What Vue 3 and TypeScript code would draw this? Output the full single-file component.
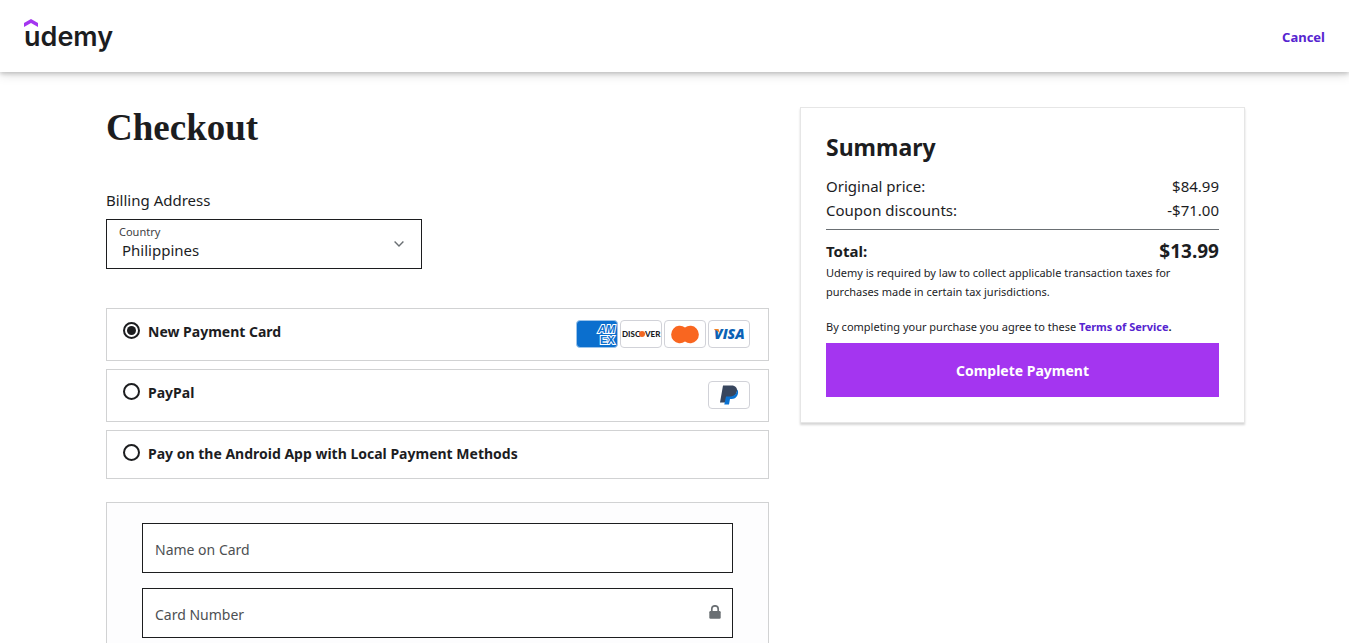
<script setup lang="ts">
import { ref } from 'vue'

interface PaymentMethod {
  id: string
  label: string
  brands: string[]
}

interface PriceLine {
  label: string
  amount: string
}

const countries: string[] = ['Philippines', 'Singapore', 'United States']
const country = ref('Philippines')

const methods: PaymentMethod[] = [
  { id: 'card', label: 'New Payment Card', brands: ['amex', 'discover', 'mastercard', 'visa'] },
  { id: 'paypal', label: 'PayPal', brands: ['paypal'] },
  { id: 'android', label: 'Pay on the Android App with Local Payment Methods', brands: [] },
]
const method = ref('card')

const prices: PriceLine[] = [
  { label: 'Original price:', amount: '$84.99' },
  { label: 'Coupon discounts:', amount: '-$71.00' },
]

const cardName = ref('')
const cardNumber = ref('')
</script>

<template>
  <div class="page">
    <header class="header">
      <a class="logo" href="#">
        <svg class="logo-hat" viewBox="0 0 14 8" aria-hidden="true">
          <path d="M7 0L14 4V8L7 4L0 8V4Z" />
        </svg>
        <span>udemy</span>
      </a>
      <a class="cancel" href="#">Cancel</a>
    </header>

    <main class="content">
      <section class="main">
        <h1>Checkout</h1>

        <h2 class="section-label">Billing Address</h2>
        <div class="country">
          <label for="country">Country</label>
          <select id="country" v-model="country">
            <option v-for="c in countries" :key="c" :value="c">{{ c }}</option>
          </select>
          <svg class="chevron" viewBox="0 0 10 6" aria-hidden="true">
            <path d="M0.6 0.6L5 5L9.4 0.6" />
          </svg>
        </div>

        <div class="methods" role="radiogroup" aria-label="Payment method">
          <label v-for="m in methods" :key="m.id" class="method" :for="m.id">
            <input :id="m.id" v-model="method" type="radio" name="method" :value="m.id" />
            <span class="method-label">{{ m.label }}</span>
            <span v-if="m.brands.length" class="brands">
              <span v-for="b in m.brands" :key="b" class="brand" :class="b">
                <svg v-if="b === 'amex'" viewBox="0 0 40 26" role="img" aria-label="American Express">
                  <g class="amex-text">
                    <text x="21" y="12" font-style="italic">AM</text>
                    <text x="23" y="23">EX</text>
                  </g>
                </svg>
                <svg v-else-if="b === 'discover'" viewBox="0 0 40 26" role="img" aria-label="Discover">
                  <text class="discover-text" x="1" y="16">DISC</text>
                  <text class="discover-text" x="24" y="16">VER</text>
                  <circle cx="21" cy="13" r="3" fill="#f26722" />
                </svg>
                <svg v-else-if="b === 'mastercard'" viewBox="0 0 40 26" role="img" aria-label="Mastercard">
                  <path d="M20 6.500A8.700 8.700 0 1 0 20 20.500A8.700 8.700 0 1 0 20 6.500Z" fill="#f96620" />
                </svg>
                <svg v-else-if="b === 'visa'" viewBox="0 0 40 26" role="img" aria-label="Visa">
                  <text class="visa-text" x="5" y="18">VISA</text>
                  <path d="M5 8H9.500L11 13C9.500 10.500 7.500 9 5 8.500Z" fill="#f58220" />
                </svg>
                <svg v-else viewBox="0 0 40 26" role="img" aria-label="PayPal">
                  <path d="M14 3.500H22.500C26.500 3.500 28.500 6 28 9C27.300 13.200 24.500 15 21 15H18L16.800 20.500H11Z" fill="#38465e" />
                  <path d="M28.200 7.500C29.500 9 29.300 11.500 28.300 13.500C27.200 16 25 17 22.500 17H21L20 22.500H15.300L17 14.500H21C24.800 14.500 27.800 12 28.200 7.500Z" fill="#0a73d3" />
                </svg>
              </span>
            </span>
          </label>
        </div>

        <form class="card-form" @submit.prevent>
          <div class="field">
            <input id="card-name" v-model="cardName" type="text" placeholder="Name on Card" aria-label="Name on Card" />
          </div>
          <div class="field">
            <input id="card-number" v-model="cardNumber" type="text" placeholder="Card Number" aria-label="Card Number" />
            <svg class="lock" viewBox="0 0 12 14" aria-hidden="true">
              <path d="M2.800 7V4A3.200 3.200 0 0 1 9.200 4V7" fill="none" stroke="#6a6f73" stroke-width="1.700" />
              <rect x="0.300" y="6" width="11.400" height="7.800" rx="1.200" fill="#6a6f73" />
            </svg>
          </div>
        </form>
      </section>

      <aside class="summary">
        <h2>Summary</h2>
        <dl class="prices">
          <div v-for="p in prices" :key="p.label" class="price">
            <dt>{{ p.label }}</dt>
            <dd>{{ p.amount }}</dd>
          </div>
          <div class="total">
            <dt>Total:</dt>
            <dd>$13.99</dd>
          </div>
        </dl>
        <p>Udemy is required by law to collect applicable transaction taxes for purchases made in certain tax jurisdictions.</p>
        <p class="terms">By completing your purchase you agree to these <a href="#">Terms of Service</a><b>.</b></p>
        <button type="button">Complete Payment</button>
      </aside>
    </main>
  </div>
</template>

<style>
html {
  scrollbar-width: none;
}

body {
  margin: 0;
  background: #fff;
}
</style>

<style scoped>
.page,
.page * {
  box-sizing: border-box;
}

.page {
  font-family: "Noto Sans", "Open Sans", sans-serif;
  font-size: 15px;
  line-height: 24px;
  color: #1c1d1f;
}

h1,
h2,
p,
dl,
dd {
  margin: 0;
}

.header {
  display: flex;
  align-items: center;
  justify-content: space-between;
  height: 72px;
  padding: 0 24px;
  background: #fff;
  box-shadow: 0 2px 4px rgba(0, 0, 0, 0.18), 0 4px 10px rgba(0, 0, 0, 0.1);
}

.logo {
  display: flex;
  flex-direction: column;
  font-family: Inter, sans-serif;
  font-size: 27px;
  font-weight: 600;
  line-height: 20px;
  color: #1c1d1f;
  text-decoration: none;
}

.logo-hat {
  width: 14px;
  height: 8px;
  fill: #a435f0;
}

.logo span {
  padding-bottom: 6px;
}

.cancel {
  padding-top: 2px;
  font-size: 13px;
  font-weight: 700;
  color: #5624d0;
  text-decoration: none;
}

.content {
  display: grid;
  grid-template-columns: minmax(0, 663fr) minmax(0, 445fr);
  gap: 31px;
  align-items: start;
  padding: 35px 104px 48px 106px;
}

h1 {
  font-family: "Liberation Serif", serif;
  font-size: 37px;
  font-weight: 700;
  line-height: 42px;
}

.section-label {
  margin-top: 39px;
  font-size: 15px;
  font-weight: 400;
  line-height: 24px;
}

.country {
  position: relative;
  max-width: 316px;
  height: 50px;
  margin-top: 7px;
}

.country label {
  position: absolute;
  top: 4px;
  left: 13px;
  font-size: 11px;
  line-height: 18px;
  color: #3e4143;
  pointer-events: none;
}

.country select {
  width: 100%;
  height: 100%;
  padding: 12px 40px 0 15px;
  border: 1px solid #1c1d1f;
  border-radius: 0;
  appearance: none;
  background: transparent;
  font: inherit;
  color: inherit;
}

.chevron {
  position: absolute;
  top: 22px;
  right: 18px;
  width: 10px;
  height: 6px;
  fill: none;
  stroke: #6a6f73;
  stroke-width: 1.4px;
}

.methods {
  display: flex;
  flex-direction: column;
  gap: 8px;
  margin-top: 39px;
}

.method {
  display: flex;
  align-items: flex-start;
  padding: 11px 18px 12px 16px;
  border: 1px solid #d1d2d3;
}

.method input {
  flex: none;
  display: grid;
  place-items: center;
  width: 17px;
  height: 17px;
  margin: 2px 8px 0 0;
  border: 2px solid #1c1d1f;
  border-radius: 50%;
  appearance: none;
}

.method input:checked::before {
  content: "";
  width: 9px;
  height: 9px;
  border-radius: 50%;
  background: #1c1d1f;
}

.method-label {
  flex: 1;
  font-size: 14px;
  font-weight: 700;
}

.brands {
  display: flex;
  gap: 2px;
}

.brand {
  width: 42px;
  height: 28px;
  border: 1px solid #d1d2d8;
  border-radius: 4px;
  overflow: hidden;
  background: #fff;
}

.brand svg {
  display: block;
  width: 100%;
  height: 100%;
}

.brand.amex {
  border-color: #9cc4ea;
  background: #0b6fce;
}

.amex-text {
  font-family: "Liberation Sans", sans-serif;
  font-size: 11px;
  font-weight: 700;
  fill: #0b6fce;
  stroke: #fff;
  stroke-width: 2px;
  paint-order: stroke;
}

.discover-text {
  font-family: Lato, sans-serif;
  font-size: 8px;
  font-weight: 900;
  fill: #1c1d1f;
}

.visa-text {
  font-family: "Open Sans", sans-serif;
  font-size: 14px;
  font-style: italic;
  font-weight: 800;
  fill: #0b62b5;
}

.card-form {
  display: flex;
  flex-direction: column;
  gap: 15px;
  margin-top: 23px;
  padding: 20px 35px;
  border: 1px solid #d1d2d3;
  background: #fdfdfe;
}

.field {
  position: relative;
}

.field input {
  display: block;
  width: 100%;
  height: 50px;
  padding: 2px 40px 0 12px;
  border: 1px solid #1c1d1f;
  border-radius: 0;
  background: #fff;
  font: inherit;
  font-size: 14px;
  color: inherit;
}

.field input::placeholder {
  color: #4d5053;
  opacity: 1;
}

.lock {
  position: absolute;
  top: 17px;
  right: 12px;
  width: 12px;
  height: 14px;
}

.summary {
  padding: 23px 25px 25px;
  border: 1px solid #e6e6e6;
  box-shadow: 0 2px 2px rgba(0, 0, 0, 0.16);
}

.summary h2 {
  font-size: 23px;
  font-weight: 700;
  line-height: 32px;
}

.prices {
  margin-top: 11px;
}

.price,
.total {
  display: flex;
  justify-content: space-between;
}

.total {
  margin-top: 7px;
  padding-top: 9px;
  border-top: 1px solid #6a6f73;
  font-weight: 700;
}

.total dd {
  font-size: 19px;
}

.summary p {
  font-size: 11px;
  line-height: 19px;
}

.summary .terms {
  margin-top: 16px;
}

.terms a {
  font-weight: 700;
  color: #5624d0;
  text-decoration: none;
}

.summary button {
  display: block;
  width: 100%;
  height: 54px;
  margin-top: 7px;
  padding: 2px 0 0;
  border: 0;
  background: #a435f0;
  font: inherit;
  font-size: 14px;
  font-weight: 700;
  color: #fff;
}

@media (max-width: 900px) {
  .content {
    grid-template-columns: minmax(0, 1fr);
    padding: 32px 24px;
  }
}
</style>
